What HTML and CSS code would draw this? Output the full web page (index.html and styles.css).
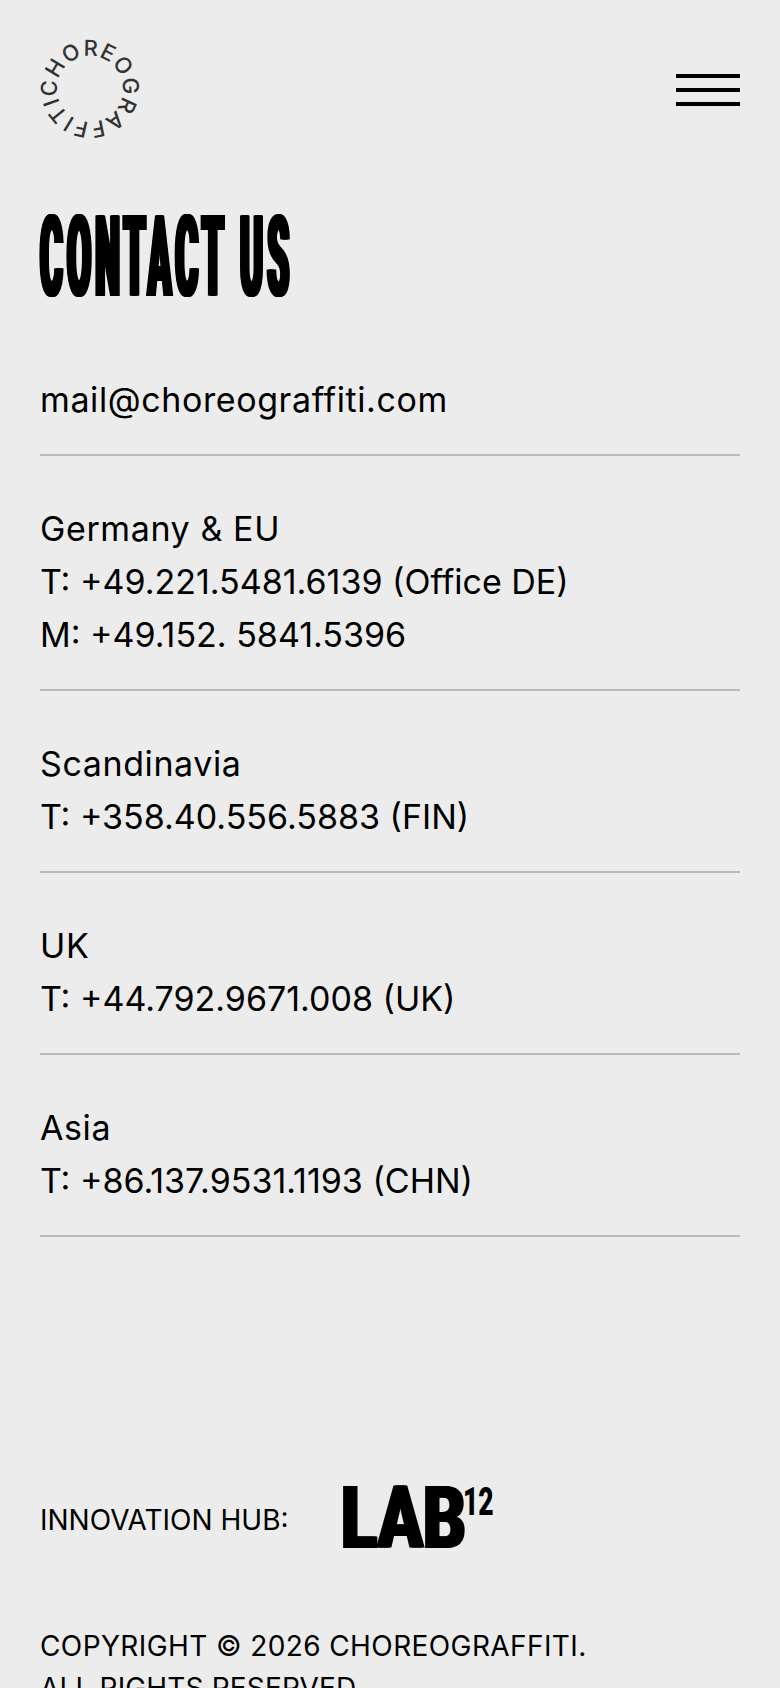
FILE: index.html
```html
<!DOCTYPE html>
<html lang="en">
<head>
<meta charset="utf-8">
<title>Contact us – Choreograffiti</title>
<link rel="stylesheet" href="styles.css">
</head>
<body>
<div class="page">
  <header class="header">
    <svg class="logo" viewBox="2 0 104 104" width="104" height="104" aria-label="Choreograffiti">
      <defs><path id="ring" d="M52 19a33 33 0 1 1-.01 0z"/></defs>
      <text class="logo-text" transform="rotate(-103 52 52)"><textPath href="#ring" textLength="206" lengthAdjust="spacing">CHOREOGRAFFITI</textPath></text>
    </svg>
    <button class="burger" aria-label="Menu"><span></span><span></span><span></span></button>
  </header>
  <main>
    <div class="title-box"><h1 class="title">CONTACT US</h1></div>
    <section class="row"><a class="line email">mail@choreograffiti.com</a></section>
    <section class="row">
      <p class="line label">Germany &amp; EU</p>
      <p class="line">T: +49.221.5481.6139 (Office DE)</p>
      <p class="line">M: +49.152. 5841.5396</p>
    </section>
    <section class="row">
      <p class="line label">Scandinavia</p>
      <p class="line">T: +358.40.556.5883 (FIN)</p>
    </section>
    <section class="row">
      <p class="line label">UK</p>
      <p class="line">T: +44.792.9671.008 (UK)</p>
    </section>
    <section class="row">
      <p class="line label">Asia</p>
      <p class="line">T: +86.137.9531.1193 (CHN)</p>
    </section>
  </main>
  <footer class="footer">
    <div class="hub">
      <span class="hub-label">INNOVATION HUB:</span>
      <div class="lab"><span class="lab-word">LAB</span><span class="lab-sup">12</span></div>
    </div>
    <p class="copy">COPYRIGHT © 2026 CHOREOGRAFFITI.<br><span class="copy-second">ALL RIGHTS RESERVED.</span></p>
  </footer>
</div>
</body>
</html>
```
FILE: styles.css
```css
html, body { margin: 0; padding: 0; height: 100%; overflow: hidden; background: #ececec; }
body { font-family: Inter, "Liberation Sans", sans-serif; color: #000; }
.page { padding: 0 40px; }
.header { display: flex; justify-content: space-between; align-items: flex-start; padding-top: 37px; }
.logo { display: block; overflow: visible; }
.logo-text { font-family: Inter, sans-serif; font-size: 22px; font-weight: 500; fill: #333; }
.burger { display: flex; flex-direction: column; gap: 10px; width: 64px; padding: 0; margin-top: 37px; border: 0; background: none; }
.burger span { display: block; height: 4px; background: #000; }
.title-box { height: 84px; margin-top: 74px; margin-bottom: 74px; }
.title { margin: 0; width: max-content; font-family: Roboto, sans-serif; font-weight: 900; font-size: 114px; line-height: 84px; letter-spacing: 14px; transform: scaleX(0.305); transform-origin: left center; text-shadow: -2px 0 #000, 2px 0 #000, -4px 0 #000, 4px 0 #000, -6px 0 #000, 6px 0 #000; }
.row { padding-top: 46px; padding-bottom: 28px; border-bottom: 2px solid #bbb; }
.row:first-of-type { padding-top: 0; }
.line { display: block; margin: 0; font-size: 34px; line-height: 53px; }
.label { letter-spacing: 0.6px; }
.email { letter-spacing: 0.6px; }
.footer { margin-top: 250px; }
.hub { display: flex; align-items: center; gap: 52px; }
.hub-label { font-size: 28px; line-height: 40px; }
.lab { display: flex; align-items: flex-start; height: 62px; margin-bottom: 4px; }
.lab-word { font-family: Roboto, sans-serif; font-weight: 900; font-size: 87px; line-height: 62px; width: 122px; transform: scaleX(0.765); transform-origin: left center; text-shadow: -2px 0 #000, 2px 0 #000; }
.lab-sup { font-family: Roboto, sans-serif; font-weight: 900; font-size: 39px; line-height: 30px; width: 31px; transform: scaleX(0.68); transform-origin: left center; }
.copy { margin: 72px 0 0; font-size: 28px; line-height: 42px; letter-spacing: 0.4px; }
.copy-second { letter-spacing: 0.15px; }
```
